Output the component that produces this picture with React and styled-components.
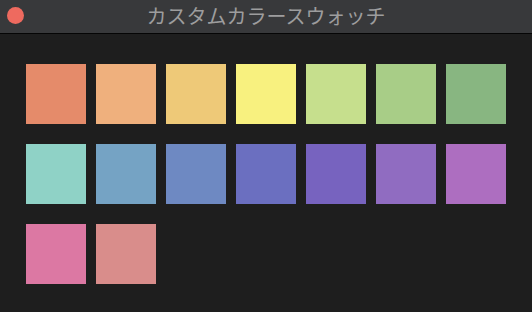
import React from 'react'
import styled, { createGlobalStyle } from 'styled-components'

const GlobalStyle = createGlobalStyle`
  html, body {
    margin: 0;
    padding: 0;
    background: #1e1e1e;
  }
`

const Window = styled.div`
  width: 532px;
  height: 312px;
  display: flex;
  flex-direction: column;
  background: #1e1e1e;
  overflow: hidden;
`

const TitleBar = styled.div`
  position: relative;
  height: 33px;
  flex: none;
  display: flex;
  align-items: center;
  justify-content: center;
  background: #38393b;
  border-bottom: 1px solid #050505;
`

const CloseButton = styled.div`
  position: absolute;
  left: 7px;
  top: 7px;
  width: 17px;
  height: 17px;
  border-radius: 50%;
  background: #ee6a5f;
`

const Title = styled.div`
  font-family: "Noto Sans CJK JP", "Noto Sans", sans-serif;
  font-size: 20px;
  line-height: 1;
  color: #9d9d9e;
  margin-top: -2px;
`

const Grid = styled.div`
  display: grid;
  grid-template-columns: repeat(7, 60px);
  column-gap: 10px;
  row-gap: 20px;
  padding: 30px 0 0 26px;
`

const Swatch = styled.div`
  width: 60px;
  height: 60px;
  background: ${p => p.$color};
`

const colors = [
  '#e58b6a', '#efb07d', '#eec978', '#f8f17f', '#c6df8d', '#a8cd87', '#88b681',
  '#8fd2c6', '#75a3c4', '#6e89c2', '#6b6fc0', '#7763bf', '#906cc1', '#ad6ec0',
  '#dc78a3', '#d98d8b',
]

export default function App() {
  return (
    <Window>
      <GlobalStyle />
      <TitleBar>
        <CloseButton />
        <Title>カスタムカラースウォッチ</Title>
      </TitleBar>
      <Grid>
        {colors.map(c => (
          <Swatch key={c} $color={c} />
        ))}
      </Grid>
    </Window>
  )
}
